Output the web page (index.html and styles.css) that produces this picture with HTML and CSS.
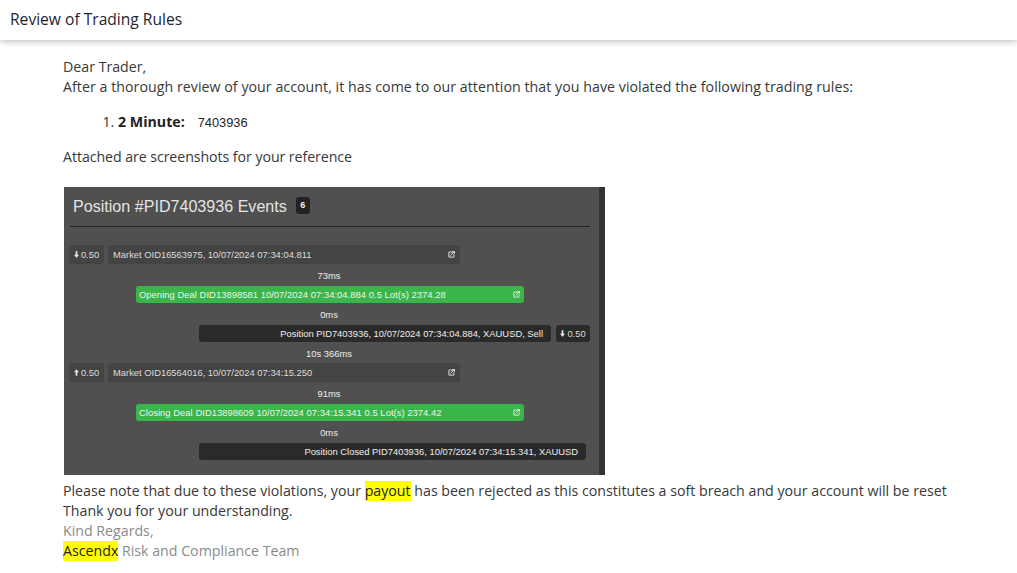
FILE: index.html
```html
<!DOCTYPE html>
<html lang="en">
<head>
<meta charset="utf-8">
<title>Review of Trading Rules</title>
<link rel="stylesheet" href="styles.css">
</head>
<body>
<svg class="defs" width="0" height="0" aria-hidden="true">
  <symbol id="ext" viewBox="0 0 8 8">
    <path d="M5.5 1.2H1v5.8h5.8V3.6" fill="none" stroke="currentColor" stroke-width="1"/>
    <path d="M2.8 5.2 7 1M4.8.4h2.8v2.8" fill="none" stroke="currentColor" stroke-width="1.1"/>
  </symbol>
  <symbol id="down" viewBox="0 0 6 8"><path d="M2 0h2v4.4h2L3 8 0 4.4h2z" fill="currentColor"/></symbol>
  <symbol id="up" viewBox="0 0 6 8"><path d="M2 8h2V3.6h2L3 0 0 3.6h2z" fill="currentColor"/></symbol>
</svg>
<header class="topbar"><h1 class="title">Review of Trading Rules</h1></header>
<main class="content">
  <p class="block">Dear Trader,<br><span class="wide">After a thorough review of your account, it has come to our attention that you have violated the following trading rules:</span></p>
  <ol class="rules">
    <li><strong>2 Minute:</strong><span class="pid">7403936</span></li>
  </ol>
  <p class="block narrow">Attached are screenshots for your reference</p>
  <section class="shot">
    <div class="shot-head"><h2 class="shot-title">Position #PID7403936 Events</h2><span class="count">6</span></div>
    <div class="shot-rule"></div>
    <div class="events">
      <div class="row row-market">
        <span class="qty"><svg class="arrow"><use href="#down"/></svg>0.50</span>
        <span class="bar bar-market">Market OID16563975, 10/07/2024 07:34:04.811<svg class="ext"><use href="#ext"/></svg></span>
      </div>
      <div class="lapse">73ms</div>
      <div class="row row-deal"><span class="bar bar-deal">Opening Deal DID13898581 10/07/2024 07:34:04.884 0.5 Lot(s) 2374.28<svg class="ext"><use href="#ext"/></svg></span></div>
      <div class="lapse">0ms</div>
      <div class="row row-pos">
        <span class="bar bar-pos">Position PID7403936, 10/07/2024 07:34:04.884, XAUUSD, Sell</span>
        <span class="qty qty-dark"><svg class="arrow"><use href="#down"/></svg>0.50</span>
      </div>
      <div class="lapse lapse-short">10s 366ms</div>
      <div class="row row-market">
        <span class="qty"><svg class="arrow"><use href="#up"/></svg>0.50</span>
        <span class="bar bar-market">Market OID16564016, 10/07/2024 07:34:15.250<svg class="ext"><use href="#ext"/></svg></span>
      </div>
      <div class="lapse">91ms</div>
      <div class="row row-deal"><span class="bar bar-deal">Closing Deal DID13898609 10/07/2024 07:34:15.341 0.5 Lot(s) 2374.42<svg class="ext"><use href="#ext"/></svg></span></div>
      <div class="lapse">0ms</div>
      <div class="row row-pos">
        <span class="bar bar-pos bar-closed">Position Closed PID7403936, 10/07/2024 07:34:15.341, XAUUSD</span>
      </div>
    </div>
  </section>
  <p class="block">Please note that due to these violations, your <mark class="hl">payout</mark> has been rejected as this constitutes a soft breach and your account will be reset<br>Thank you for your understanding.</p>
  <p class="block sign">Kind Regards,<br><mark class="hl">Ascendx</mark> Risk and Compliance Team</p>
</main>
</body>
</html>
```

FILE: styles.css
```css
* { box-sizing: border-box; }
html, body { margin: 0; height: 100%; overflow: hidden; background: #fff; }
body { font-family: "Open Sans", "Noto Sans", sans-serif; font-size: 14.2px; line-height: 20px; color: #383838; }
.defs { display: block; height: 0; }
.topbar { height: 40px; padding: 0 10px 2px; display: flex; align-items: center; background: #fff; box-shadow: 0 1px 7px rgba(0,0,0,.3); }
.title { margin: 0; font-size: 15.6px; font-weight: 500; color: #1f2530; }
.content { padding: 17px 0 0 63px; }
.block { margin: 0; }
.wide { letter-spacing: .04px; }
.narrow { letter-spacing: -.07px; }
.rules { margin: 15px 0 14px; padding: 0 0 0 55px; }
.rules strong { font-weight: 700; color: #222; }
.pid { margin-left: 13px; font-family: "Liberation Sans", sans-serif; font-size: 12.8px; color: #222; }
.shot { width: 541px; height: 288px; margin: 20px 0 6px 1px; background: #505050; border-right: 6px solid #333; font-family: "Liberation Sans", sans-serif; color: #e6e6e6; }
.shot-head { height: 39px; padding: 10px 0 0 9px; display: flex; align-items: flex-start; }
.shot-title { margin: 0; font-size: 16.1px; line-height: 18px; font-weight: 400; color: #e4e4e4; }
.count { width: 14px; height: 17px; margin-left: 9px; background: #222; border-radius: 3px; font-size: 9px; line-height: 17px; font-weight: 700; text-align: center; color: #eee; }
.shot-rule { height: 1px; margin: 0 9px 0 6px; background: #222; }
.events { padding-top: 18px; font-size: 9.4px; line-height: 17px; }
.row { display: flex; height: 17px; }
.row-market { height: 19px; padding-left: 5px; gap: 4px; }
.row-deal { padding-left: 72px; }
.row-pos { padding-left: 135px; gap: 5px; }
.lapse { width: 530px; height: 22px; line-height: 24px; text-align: center; color: #eee; }
.lapse-short { height: 21px; line-height: 23px; }
.qty { display: flex; align-items: center; justify-content: center; gap: 2px; width: 35px; background: #444; border-radius: 3px; color: #ddd; }
.qty-dark { width: 34px; background: #2a2a2a; }
.arrow { width: 5px; height: 7px; color: #eee; }
.bar { display: flex; align-items: center; border-radius: 3px; }
.bar-market { width: 352px; padding: 0 5px; justify-content: space-between; background: #444; color: #ddd; }
.bar-deal { width: 388px; padding: 0 4px 0 3px; justify-content: space-between; background: #39b54a; color: #f2f2f2; letter-spacing: .05px; }
.bar-pos { width: 352px; padding: 0 8px; justify-content: flex-end; background: #2a2a2a; color: #eee; }
.bar-closed { width: 387px; }
.ext { width: 7px; height: 7px; color: #eee; }
.hl { display: inline-block; height: 20px; background: #ffff00; color: #222; }
.sign { color: #8a8a8a; }
```
